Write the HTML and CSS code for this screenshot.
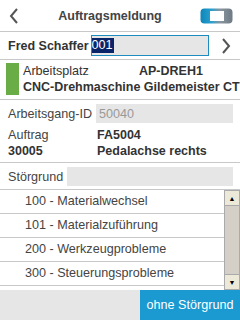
FILE: index.html
```html
<!DOCTYPE html>
<html lang="de">
<head>
    <meta charset="UTF-8">
    <meta name="viewport" content="width=device-width, initial-scale=1.0">
    <title>Auftragsmeldung</title>
    <link rel="stylesheet" href="styles.css">
</head>
<body>
    <div class="screen">
        <header class="topbar">
            <svg class="back" width="12" height="18" viewBox="0 0 12 18">
                <path d="M9 2 L3 9 L9 16" fill="none" stroke="#555" stroke-width="2"/>
            </svg>
            <h1>Auftragsmeldung</h1>
            <svg class="toggle" width="33" height="16" viewBox="0 0 33 16">
                <defs>
                    <linearGradient id="tg" x1="0" x2="1" y1="0" y2="0">
                        <stop offset="0" stop-color="#0d86b8"/>
                        <stop offset="0.35" stop-color="#2aa0d0"/>
                        <stop offset="0.6" stop-color="#8a96a0"/>
                        <stop offset="1" stop-color="#6f7b84"/>
                    </linearGradient>
                </defs>
                <rect x="0.5" y="0.5" width="32" height="15" rx="4" fill="url(#tg)"/>
                <rect x="10" y="3" width="14" height="10" fill="#fff"/>
            </svg>
        </header>

        <div class="user-row">
            <span class="user">Fred Schaffer</span>
            <div class="user-input"><span class="sel">001</span></div>
            <svg class="next" width="12" height="18" viewBox="0 0 12 18">
                <path d="M3 2 L9 9 L3 16" fill="none" stroke="#555" stroke-width="2"/>
            </svg>
        </div>

        <div class="workplace">
            <div class="status"></div>
            <div class="wp-text">
                <div class="wp-line">
                    <span class="wp-label">Arbeitsplatz</span>
                    <span class="bold">AP-DREH1</span>
                </div>
                <div class="bold nowrap">CNC-Drehmaschine Gildemeister CTC</div>
            </div>
        </div>

        <div class="info">
            <div class="field">
                <span class="label">Arbeitsgang-ID</span>
                <div class="box gray-text">50040</div>
            </div>
            <div class="pair">
                <span class="label">Auftrag</span>
                <span class="bold">FA5004</span>
                <span class="bold">30005</span>
                <span class="bold">Pedalachse rechts</span>
            </div>
        </div>

        <div class="reason">
            <span class="label">Störgrund</span>
            <div class="box reason-box"></div>
        </div>

        <div class="list">
            <ul>
                <li>100 - Materialwechsel</li>
                <li>101 - Materialzuführung</li>
                <li>200 - Werkzeugprobleme</li>
                <li>300 - Steuerungsprobleme</li>
            </ul>
            <div class="scrollbar">
                <div class="arrow">&#9650;</div>
                <div class="track"></div>
                <div class="arrow">&#9660;</div>
            </div>
        </div>

        <footer class="bottombar">
            <button class="no-reason">ohne Störgrund</button>
        </footer>
    </div>
</body>
</html>
```

FILE: styles.css
```css
body {
    margin: 0;
    padding: 0;
    font-family: "Liberation Sans", Arial, sans-serif;
    font-size: 12.6px;
    color: #333;
    background-color: #fff;
}
.screen {
    width: 240px;
    height: 320px;
    display: flex;
    flex-direction: column;
    overflow: hidden;
}
.topbar {
    height: 31px;
    display: flex;
    align-items: center;
    padding: 0 7px 0 8px;
    border-bottom: 1px solid #c8c8c8;
}
.topbar h1 {
    flex: 1;
    margin: 0;
    font-size: 12.5px;
    text-align: center;
    color: #444;
}
.toggle {
    display: block;
}
.user-row {
    height: 27px;
    display: flex;
    align-items: center;
    padding: 0 8px;
    border-bottom: 1px solid #c8c8c8;
}
.user {
    font-weight: bold;
    font-size: 12.5px;
    margin-right: 2px;
    white-space: nowrap;
}
.user-input {
    width: 116px;
    height: 19px;
    border: 1px solid #1f8cbf;
    background-color: #e6e6e6;
    display: flex;
    align-items: center;
    font-size: 12.6px;
}
.sel {
    background-color: #0a246a;
    color: #fff;
    line-height: 15px;
    padding-right: 1px;
}
.next {
    margin-left: auto;
}
.workplace {
    display: flex;
    padding: 3px 0 4px 6px;
    border-bottom: 1px solid #c8c8c8;
}
.status {
    width: 13px;
    height: 32px;
    background-color: #6aac45;
    margin-right: 4px;
    flex-shrink: 0;
}
.wp-text {
    line-height: 16px;
    min-width: 0;
}
.wp-line {
    display: flex;
}
.wp-label {
    width: 116px;
}
.bold {
    font-weight: bold;
    font-size: 12.5px;
}
.nowrap {
    white-space: nowrap;
}
.label {
    color: #444;
}
.info {
    padding: 3px 7px 3px 8px;
    border-bottom: 1px solid #c8c8c8;
}
.field {
    display: flex;
    align-items: center;
    gap: 4px;
    height: 21px;
}
.box {
    flex: 1;
    height: 19px;
    background-color: #e6e6e6;
    display: flex;
    align-items: center;
    padding-left: 3px;
}
.gray-text {
    color: #999;
}
.pair {
    display: grid;
    grid-template-columns: 89px 1fr;
    line-height: 16px;
    margin-top: 3px;
}
.reason {
    display: flex;
    align-items: center;
    gap: 4px;
    padding: 3px 7px 2px 8px;
    height: 21px;
}
.reason-box {
    flex: 1;
}
.list {
    display: flex;
    height: 100px;
    border-top: 1px solid #c8c8c8;
}
.list ul {
    flex: 1;
    margin: 0;
    padding: 0;
    list-style: none;
}
.list li {
    height: 23px;
    line-height: 23px;
    padding-left: 25px;
    border-bottom: 1px solid #c8c8c8;
    color: #444;
}
.scrollbar {
    width: 16px;
    display: flex;
    flex-direction: column;
    background-color: #f0ede6;
}
.arrow {
    height: 16px;
    font-size: 7px;
    line-height: 16px;
    text-align: center;
    background-color: #ece9d8;
    border: 1px solid #aaa;
    box-sizing: border-box;
    color: #000;
}
.track {
    flex: 1;
    background-color: #d4d0c8;
    border-left: 1px solid #aaa;
    border-right: 1px solid #aaa;
}
.bottombar {
    flex: 1;
    display: flex;
    justify-content: flex-end;
    background-color: #e6e6e6;
}
.no-reason {
    width: 100px;
    border: none;
    background-color: #1a9ad0;
    color: #fff;
    font-family: "Liberation Sans", Arial, sans-serif;
    font-size: 12.6px;
    padding: 0;
}
```
